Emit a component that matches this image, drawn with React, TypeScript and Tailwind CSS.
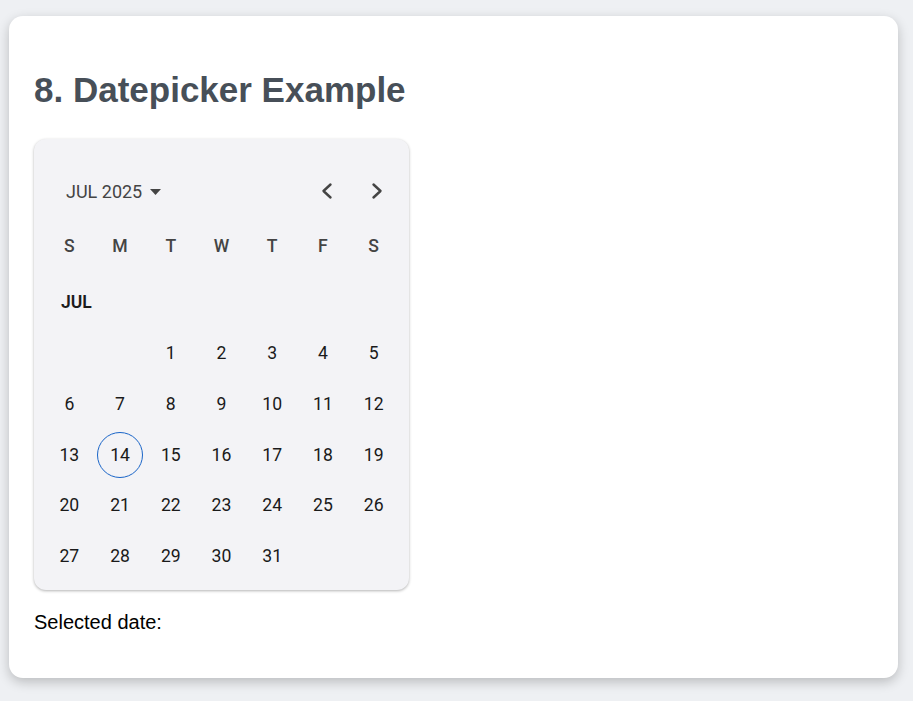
import React from 'react';

const weekdays = ['S', 'M', 'T', 'W', 'T', 'F', 'S'];

// July 2025 starts on a Tuesday
const cells: (number | null)[] = [null, null, ...Array.from({ length: 31 }, (_, i) => i + 1)];
const rows: (number | null)[][] = [];
for (let i = 0; i < cells.length; i += 7) rows.push(cells.slice(i, i + 7));

const Chevron = ({ dir }: { dir: 'left' | 'right' }) => (
    <svg width="20" height="20" viewBox="0 0 20 20" fill="none">
        <path
            d={dir === 'left' ? 'M13.5 3.5 L6.5 10 L13.5 16.5' : 'M6.5 3.5 L13.5 10 L6.5 16.5'}
            stroke="#444"
            strokeWidth="2.4"
            strokeLinecap="round"
            strokeLinejoin="round"
        />
    </svg>
);

const Calendar = () => {
    return (
        <div
            className="w-[375px] h-[451px] bg-[#f3f3f6] rounded-[12px] shadow-[0_1px_3px_rgba(0,0,0,0.3)] px-[10px] pt-[30px] pb-[10px]"
            style={{ fontFamily: 'Roboto, sans-serif' }}
        >
            {/* Header */}
            <div className="h-[44px] flex items-center justify-between">
                <div className="flex items-center pl-[22px] text-[18px] text-[#444]">
                    <span>JUL 2025</span>
                    <svg width="11" height="6" viewBox="0 0 11 6" className="ml-[8px] mt-[1px]">
                        <path d="M0 0 L11 0 L5.5 6 Z" fill="#444" />
                    </svg>
                </div>
                <div className="flex items-center gap-[30px] pr-[12px]">
                    <Chevron dir="left" />
                    <Chevron dir="right" />
                </div>
            </div>

            {/* Weekdays */}
            <div className="grid grid-cols-7 h-[40px] mt-[13px] items-center text-center text-[17.6px] font-medium text-[#444]">
                {weekdays.map((d, i) => (
                    <span key={i}>{d}</span>
                ))}
            </div>

            {/* Month label */}
            <div className="h-[40px] mt-[16px] flex items-center pl-[17px] text-[17.6px] font-semibold text-[#1c1c1c]">
                JUL
            </div>

            {/* Days */}
            <div className="mt-[6px]">
                {rows.map((row, r) => (
                    <div key={r} className="grid grid-cols-7 h-[50.7px] items-center text-center text-[17.6px] text-[#1a1a1a]">
                        {Array.from({ length: 7 }).map((_, c) => {
                            const d = row[c];
                            if (!d) return <span key={c} />;
                            return (
                                <div key={c} className="flex justify-center">
                                    <span
                                        className={
                                            d === 14
                                                ? 'w-[46px] h-[46px] rounded-full border border-[#1a65c8] flex items-center justify-center'
                                                : 'w-[46px] h-[46px] flex items-center justify-center'
                                        }
                                    >
                                        {d}
                                    </span>
                                </div>
                            );
                        })}
                    </div>
                ))}
            </div>
        </div>
    );
};

const App = () => {
    return (
        <div className="w-[913px] h-[701px] bg-[#eef0f3] pt-[16px] pl-[9px] overflow-hidden">
            <div
                className="w-[889px] h-[662px] bg-white rounded-[14px] shadow-[0_4px_12px_rgba(0,0,0,0.22)] px-[25px]"
                style={{ fontFamily: '"Liberation Sans", Arial, sans-serif' }}
            >
                <h2 className="pt-[54px] text-[35px] leading-[40px] font-bold text-[#474f58] mb-[29px]">
                    8. Datepicker Example
                </h2>
                <Calendar />
                <p className="mt-[21px] text-[20px] leading-[23px] text-black">Selected date:</p>
            </div>
        </div>
    );
};

export default App;
